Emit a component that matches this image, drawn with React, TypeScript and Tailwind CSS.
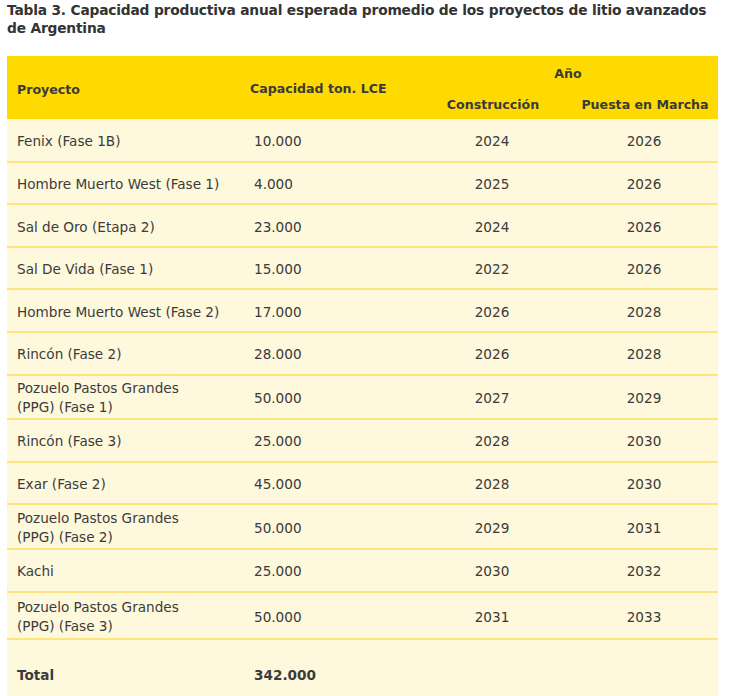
const rows: { name: string[]; cap: string; build: string; start: string; h: string }[] = [
  { name: ['Fenix (Fase 1B)'], cap: '10.000', build: '2024', start: '2026', h: 'h-[42.7px]' },
  { name: ['Hombre Muerto West (Fase 1)'], cap: '4.000', build: '2025', start: '2026', h: 'h-[42.7px]' },
  { name: ['Sal de Oro (Etapa 2)'], cap: '23.000', build: '2024', start: '2026', h: 'h-[42.7px]' },
  { name: ['Sal De Vida (Fase 1)'], cap: '15.000', build: '2022', start: '2026', h: 'h-[42.3px]' },
  { name: ['Hombre Muerto West (Fase 2)'], cap: '17.000', build: '2026', start: '2028', h: 'h-[42.6px]' },
  { name: ['Rincón (Fase 2)'], cap: '28.000', build: '2026', start: '2028', h: 'h-[43px]' },
  { name: ['Pozuelo Pastos Grandes', '(PPG) (Fase 1)'], cap: '50.000', build: '2027', start: '2029', h: 'h-[43.7px]' },
  { name: ['Rincón (Fase 3)'], cap: '25.000', build: '2028', start: '2030', h: 'h-[43px]' },
  { name: ['Exar (Fase 2)'], cap: '45.000', build: '2028', start: '2030', h: 'h-[42.6px]' },
  { name: ['Pozuelo Pastos Grandes', '(PPG) (Fase 2)'], cap: '50.000', build: '2029', start: '2031', h: 'h-[45px]' },
  { name: ['Kachi'], cap: '25.000', build: '2030', start: '2032', h: 'h-[42.4px]' },
  { name: ['Pozuelo Pastos Grandes', '(PPG) (Fase 3)'], cap: '50.000', build: '2031', start: '2033', h: 'h-[47.8px]' },
];

export default function App() {
  return (
    <div className="w-[730px] h-[696px] overflow-hidden bg-white text-[#3b3b3b] font-['DejaVu_Sans',sans-serif]">
      <h1 className="pl-[7px] pt-[2px] text-[13.8px] leading-[17.5px] font-bold text-[#333333] tracking-[-0.2px]">
        Tabla 3. Capacidad productiva anual esperada promedio de los proyectos de litio avanzados
        <br />
        de Argentina
      </h1>

      <table className="ml-[7px] mt-[19px] w-[711px] table-fixed border-collapse">
        <colgroup>
          <col className="w-[235px]" />
          <col className="w-[176px]" />
          <col className="w-[152px]" />
          <col className="w-[148px]" />
        </colgroup>
        <thead className="bg-[#FFDA00] text-[12.6px] font-bold text-[#3a3a3a]">
          <tr className="h-[32px]">
            <th rowSpan={2} className="pl-[10px] text-left align-middle pt-[5px]">
              Proyecto
            </th>
            <th rowSpan={2} className="pl-[8px] text-left align-middle pt-[3px]">
              Capacidad ton. LCE
            </th>
            <th colSpan={2} className="text-center align-bottom pb-[4px]">
              Año
            </th>
          </tr>
          <tr className="h-[31px]">
            <th className="text-center align-top pt-[8px] pr-[2px]">Construcción</th>
            <th className="text-center align-top pt-[8px] pl-[2px]">Puesta en Marcha</th>
          </tr>
        </thead>
        <tbody className="bg-[#FEF8DC] text-[13.6px] leading-[19px]">
          {rows.map((r, i) => (
            <tr key={i} className={`${r.h} border-b-2 border-[#FDE47E]`}>
              <td className="pl-[10px] pt-[3px] align-middle">
                {r.name.map((l, j) => (
                  <div key={j}>{l}</div>
                ))}
              </td>
              <td className="pl-[12px] pt-[3px] align-middle">{r.cap}</td>
              <td className="text-center pt-[3px] align-middle pr-[4px]">{r.build}</td>
              <td className="text-center pt-[3px] align-middle">{r.start}</td>
            </tr>
          ))}
          <tr className="h-[72px]">
            <td className="pl-[10px] align-middle font-bold">Total</td>
            <td className="pl-[12px] align-middle font-bold">342.000</td>
            <td />
            <td />
          </tr>
        </tbody>
      </table>
    </div>
  );
}
